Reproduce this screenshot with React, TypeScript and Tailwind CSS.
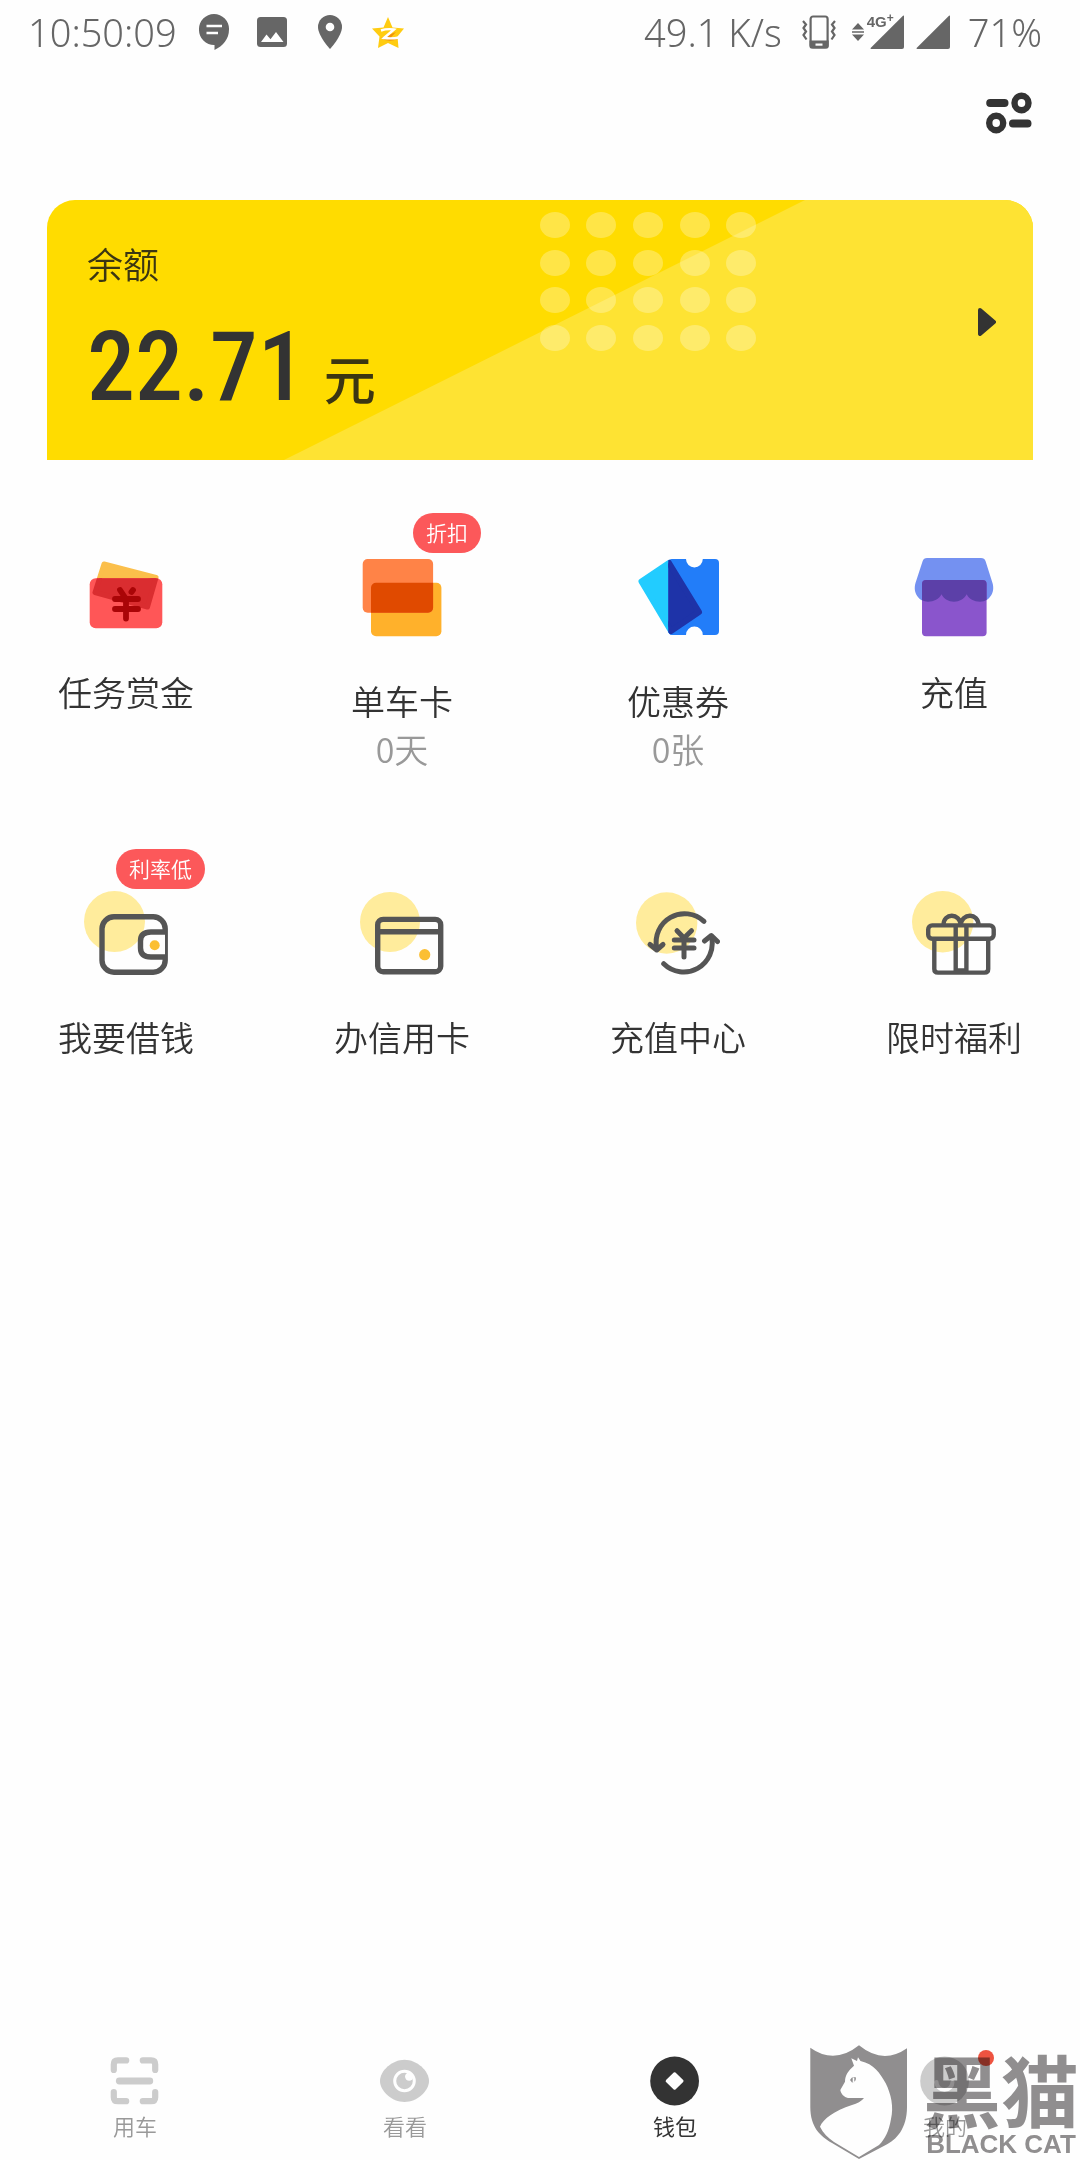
import type { ReactNode } from 'react';

type Feature = {
  label: string;
  icon: ReactNode;
  sub?: string;
  badge?: string;
  tight?: boolean;
};

type Tab = {
  label: string;
  icon: ReactNode;
  active?: boolean;
  dot?: boolean;
};

const BountyIcon = () => (
  <svg viewBox="0 0 84 84" className="size-[84px]">
    <defs>
      <clipPath id="bounty-front">
        <rect x="5.7" y="23.3" width="72.6" height="50" rx="6" />
      </clipPath>
    </defs>
    <path d="M20 9 L72 22.5 L63.5 52 L11 37.5Z" fill="#fbbf4b" stroke="#fbbf4b" strokeWidth="5" strokeLinejoin="round" />
    <rect x="5.7" y="23.3" width="72.6" height="50" rx="6" fill="#ff5657" />
    <path d="M20 9 L72 22.5 L63.5 52 L11 37.5Z" fill="#da2d30" stroke="#da2d30" strokeWidth="5" strokeLinejoin="round" clipPath="url(#bounty-front)" />
    <path d="M36 35 L42 44 M49 35 L47.5 37 M31 44 H54 M31 54 H54 M42 44 V63.5" stroke="#aa0507" strokeWidth="5.8" strokeLinecap="round" fill="none" />
  </svg>
);

const BikeCardIcon = () => (
  <svg viewBox="0 0 84 84" className="size-[84px]">
    <rect x="11" y="27.7" width="70.4" height="53.6" rx="5" fill="#ffb12b" />
    <rect x="2.7" y="4" width="70.4" height="53.7" rx="5" fill="#ff8347" />
    <path d="M16 27.7 H73.1 V52.7 A5 5 0 0 1 68.1 57.7 H11 V32.7 A5 5 0 0 1 16 27.7Z" fill="#e04a00" />
  </svg>
);

const CouponIcon = () => (
  <svg viewBox="0 0 84 84" className="size-[84px]">
    <defs>
      <clipPath id="coupon-right">
        <rect x="32.3" y="0" width="52" height="84" />
      </clipPath>
    </defs>
    <path d="M5.5 26.5 L33 8 L63 57 L35 76Z" fill="#22ccff" stroke="#22ccff" strokeWidth="6" strokeLinejoin="round" />
    <path d="M36 4 H50 A8.4 8.4 0 0 0 66.8 4 H79 A4 4 0 0 1 83 8 V76 A4 4 0 0 1 79 80 H66.8 A8.4 8.4 0 0 0 50 80 H36 A4 4 0 0 1 32.3 76 V8 A4 4 0 0 1 36 4Z" fill="#227df9" />
    <path d="M5.5 26.5 L33 8 L63 57 L35 76Z" fill="#1e33a8" stroke="#1e33a8" strokeWidth="6" strokeLinejoin="round" clipPath="url(#coupon-right)" />
  </svg>
);

const awning =
  'M15 3 H69 Q72.5 3 73.6 6.3 L80.5 28 C83.5 38 77 46.7 68 46.7 C62 46.7 57 44 54.7 39.3 C52 44 47.5 46.7 42 46.7 C36.5 46.7 32 44 29.5 39.3 C27 44 22 46.7 16 46.7 C7 46.7 0.5 38 3.5 28 L10.6 6.3 Q11.7 3 15 3Z';

const ShopIcon = () => (
  <svg viewBox="0 0 84 84" className="size-[84px]">
    <defs>
      <clipPath id="shop-body">
        <rect x="10" y="25" width="64.6" height="56.3" rx="4" />
      </clipPath>
    </defs>
    <path d={awning} fill="#7491f1" />
    <rect x="10" y="25" width="64.6" height="56.3" rx="4" fill="#8a55cc" />
    <path d={awning} fill="#5c40a8" clipPath="url(#shop-body)" />
  </svg>
);

const LoanIcon = () => (
  <svg viewBox="0 0 84 84" className="size-[84px]" fill="none" stroke="#555" strokeWidth="5.4">
    <circle cx="30.5" cy="30.5" r="30.5" fill="#ffec9c" stroke="none" />
    <rect x="18" y="25.8" width="63.2" height="55.4" rx="12" />
    <path d="M81 41 H67 Q56.5 41 56.5 50 V57 Q56.5 66 67 66 H81" fill="#fefefe" />
    <circle cx="70.7" cy="54.3" r="5" fill="#fbbf33" stroke="none" />
  </svg>
);

const CreditCardIcon = () => (
  <svg viewBox="0 0 84 84" className="size-[84px]" fill="none" stroke="#555" strokeWidth="5.4">
    <circle cx="30" cy="31" r="30" fill="#ffec9c" stroke="none" />
    <rect x="17.7" y="28.4" width="63" height="52.3" rx="5.5" />
    <path d="M18 40.8 H80" />
    <circle cx="64.7" cy="63.7" r="5.6" fill="#fbbf33" stroke="none" />
  </svg>
);

const TopUpIcon = () => (
  <svg viewBox="0 0 84 84" className="size-[84px]" fill="none" stroke="#555" strokeWidth="5" strokeLinecap="round" strokeLinejoin="round">
    <circle cx="30.7" cy="32" r="30.7" fill="#ffec9c" stroke="none" />
    <path d="M68 30.3 A28.5 28.5 0 0 0 20.7 57" />
    <path d="M14 53.5 L20.7 59 L27 53.5" />
    <path d="M27.7 72.7 A28.5 28.5 0 0 0 75.5 46" />
    <path d="M68.5 50 L75.3 44.5 L81.5 50.5" />
    <path d="M41 39.7 L48 47 L55.5 39.7 M38.3 49 H58 M38.3 57 H58 M48 48 V66" />
  </svg>
);

const GiftIcon = () => (
  <svg viewBox="0 0 84 84" className="size-[84px]" fill="none" stroke="#555" strokeWidth="4.4">
    <circle cx="30.7" cy="30.7" r="30.7" fill="#ffec9c" stroke="none" />
    <path d="M31.5 34 C31.5 21.5 48 22 48.7 34 C49.5 22 66.5 21.5 66.5 34" />
    <rect x="16.2" y="34.4" width="65.5" height="13.4" rx="4" />
    <path d="M22.3 48 V78 Q22.3 81.6 26 81.6 H72.5 Q76.2 81.6 76.2 78 V48" />
    <path d="M43.7 34 V81 M54.4 34 V81 M44 79.5 H54" />
  </svg>
);

const ScanIcon = () => (
  <svg viewBox="0 0 50 50" className="size-[50px]" fill="none" stroke="#ccc" strokeWidth="6.2" strokeLinecap="round">
    <path d="M3.8 14 V8.4 Q3.8 4.4 7.8 4.4 H16.2 M32.8 4.4 H41.2 Q45.2 4.4 45.2 8.4 V14 M45.2 36 V41.2 Q45.2 45.2 41.2 45.2 H32.8 M16.2 45.2 H7.8 Q3.8 45.2 3.8 41.2 V36" />
    <path d="M9.3 25 H39.8" strokeWidth="6.8" />
  </svg>
);

const EyeIcon = () => (
  <svg viewBox="0 0 50 50" className="size-[50px]">
    <path d="M24.5 3.8 C37 3.8 49 15 49 25 C49 35 37 46 24.5 46 C12 46 0 35 0 25 C0 15 12 3.8 24.5 3.8Z" fill="#ccc" />
    <circle cx="24.5" cy="25" r="9.8" fill="none" stroke="#fefefe" strokeWidth="3" />
    <circle cx="29.2" cy="20.6" r="4.2" fill="#fefefe" />
  </svg>
);

const CoinIcon = () => (
  <svg viewBox="0 0 50 50" className="size-[50px]">
    <circle cx="24.6" cy="25" r="24.4" fill="#333" />
    <path d="M24.6 17.5 L32.3 25 L24.6 32.5 L16.9 25Z" fill="#fefefe" stroke="#fefefe" strokeWidth="2.5" strokeLinejoin="round" />
  </svg>
);

const MeIcon = () => (
  <svg viewBox="0 0 50 50" className="size-[50px]">
    <circle cx="24.6" cy="25" r="24.4" fill="#ccc" />
    <path d="M16.5 26 A8 8 0 0 0 32.5 26" fill="none" stroke="#fefefe" strokeWidth="4" strokeLinecap="round" />
  </svg>
);

const features: Feature[][] = [
  [
    { label: '任务赏金', icon: <BountyIcon />, tight: true },
    { label: '单车卡', icon: <BikeCardIcon />, sub: '0天', badge: '折扣' },
    { label: '优惠券', icon: <CouponIcon />, sub: '0张' },
    { label: '充值', icon: <ShopIcon />, tight: true },
  ],
  [
    { label: '我要借钱', icon: <LoanIcon />, badge: '利率低' },
    { label: '办信用卡', icon: <CreditCardIcon /> },
    { label: '充值中心', icon: <TopUpIcon /> },
    { label: '限时福利', icon: <GiftIcon /> },
  ],
];

const tabs: Tab[] = [
  { label: '用车', icon: <ScanIcon /> },
  { label: '看看', icon: <EyeIcon /> },
  { label: '钱包', icon: <CoinIcon />, active: true },
  { label: '我的', icon: <MeIcon />, dot: true },
];

const StatusBar = () => (
  <div className="flex h-16 items-center justify-between pl-7 pr-[38px] font-['Noto_Sans',sans-serif] text-[38px] leading-none font-light text-[#666]">
    <div className="flex items-center">
      <span className="w-[171px]">10:50:09</span>
      <svg viewBox="0 0 30 36" className="h-9 w-[30px]">
        <path d="M15 0 A15 15 0 0 1 30 15.5 C30 25 24 32 15.5 36 V31 A15 15 0 0 1 0 15.5 A15 15 0 0 1 15 0Z" fill="#666" />
        <path d="M7.5 12 H23 M7.5 19 H19" stroke="#fefefe" strokeWidth="2.6" />
      </svg>
      <svg viewBox="0 0 30 30" className="ml-7 size-[30px]">
        <rect width="30" height="30" rx="3.5" fill="#666" />
        <path d="M4 25 L9.5 17.5 L13.5 22.3 L19 15 L26.5 25Z" fill="#fefefe" />
      </svg>
      <svg viewBox="0 0 24 34" className="ml-[31px] h-[34px] w-6">
        <path d="M12 0 A12 12 0 0 1 24 12 C24 21 12 34 12 34 C12 34 0 21 0 12 A12 12 0 0 1 12 0Z" fill="#666" />
        <circle cx="12" cy="12" r="4.3" fill="#fefefe" />
      </svg>
      <svg viewBox="0 0 32 31" className="ml-[30px] h-[31px] w-8">
        <path d="M16 0 L20.5 10.5 L32 11.5 L25.5 19.5 L26.5 31 L16 26 L6 31 L7.5 19.5 L0 11.5 L11.5 10.5Z" fill="#fc1" />
        <path d="M9 21 Q16 26 26 22 L18 21.5 L24 15Z" fill="#f0920a" />
        <path d="M9 13.5 Q15 11.5 22 12.5 L12 21 Q20 22 27 20.5" fill="none" stroke="#fff" strokeWidth="2.4" />
      </svg>
    </div>
    <div className="flex items-center">
      <span>49.1 K/s</span>
      <svg viewBox="0 0 34 34" className="ml-5 size-[34px]" fill="none" stroke="#666" strokeWidth="2.2">
        <rect x="8.6" y="1.5" width="17" height="31" rx="2.5" />
        <path d="M8.6 26.5 H25.6 V31 Q25.6 32.5 24 32.5 H10 Q8.6 32.5 8.6 31Z" fill="#666" />
        <path d="M13.5 29.6 H20.5" stroke="#fefefe" />
        <path d="M1 6 L4 9.5 L1.5 13 L4 16.5 L1.5 20 L4.5 24.5 M33 6 L30 9.5 L32.5 13 L30 16.5 L32.5 20 L29.5 24.5" />
      </svg>
      <div className="relative ml-4 flex items-center">
        <svg viewBox="0 0 12 18" className="h-[18px] w-3" fill="#666">
          <path d="M6 0 L12 6.5 H0Z M0 11.5 H12 L6 18Z M0 8.3 H12 V9.7 H0Z" />
        </svg>
        <span className="absolute -top-px left-[15px] flex font-['Liberation_Sans',sans-serif] text-[15px] leading-none font-bold">
          4G<span className="text-xs leading-[8px]">+</span>
        </span>
        <svg viewBox="0 0 34 34" className="ml-[6px] size-[34px]">
          <path d="M34 1 Q34 0 33 0.8 L0.6 33 Q0 34 1.5 34 H32 Q34 34 34 32Z" fill="#666" />
        </svg>
      </div>
      <svg viewBox="0 0 34 34" className="ml-3 size-[34px]">
        <path d="M34 1 Q34 0 33 0.8 L0.6 33 Q0 34 1.5 34 H32 Q34 34 34 32Z" fill="#666" />
      </svg>
      <span className="ml-[18px]">71%</span>
    </div>
  </div>
);

const BalanceCard = () => (
  <a href="#balance" className="relative mx-[47px] flex h-[260px] items-center justify-between overflow-hidden rounded-t-[28px] bg-[#ffdc00] pr-[37px] pl-10">
    <svg viewBox="0 0 986 260" preserveAspectRatio="none" className="absolute inset-0 h-full w-full">
      <path d="M237 260 L758 0 H986 V260Z" fill="#fee333" />
      {[25, 63, 100, 138].map((cy) =>
        [508, 554, 601, 648, 694].map((cx) => (
          <ellipse key={`${cx}-${cy}`} cx={cx} cy={cy} rx="15" ry="13" fill="#fff" fillOpacity="0.28" />
        ))
      )}
    </svg>
    <div className="relative text-[#3b3612]">
      <p className="text-[36px] leading-[48px] font-[350]">余额</p>
      <p className="mt-[26px] flex items-baseline gap-[18px]">
        <span className="font-['Roboto_Condensed',sans-serif] text-[96px] leading-[108px] font-medium text-[#333]">22.71</span>
        <span className="text-[52px] leading-none font-medium">元</span>
      </p>
    </div>
    <svg viewBox="0 0 18 28" className="relative mb-4 h-7 w-[18px]">
      <path d="M2 2 L16 14 L2 26Z" fill="#333" stroke="#333" strokeWidth="4" strokeLinejoin="round" />
    </svg>
  </a>
);

const FeatureButton = ({ item }: { item: Feature }) => (
  <button type="button" className="relative flex w-40 flex-col items-center">
    {item.icon}
    {item.badge && (
      <span className="absolute -top-[42px] right-px rounded-full bg-[#fc585a] px-[13px] pb-[2px] text-[21px] leading-[38px] font-[350] text-white">
        {item.badge}
      </span>
    )}
    <span className={`${item.tight ? 'mt-[29px]' : 'mt-[38px]'} text-[34px] leading-[48px] font-[350] whitespace-nowrap text-[#333]`}>
      {item.label}
    </span>
    {item.sub && <span className="text-[34px] leading-[48px] font-[350] text-[#999]">{item.sub}</span>}
  </button>
);

const Watermark = () => (
  <div className="pointer-events-none absolute right-0 bottom-0 flex items-end gap-4 text-[#918f90] mix-blend-multiply">
    <svg viewBox="0 0 97 115" className="h-[115px] w-[97px]">
      <path d="M0.3 2.7 Q24.5 20 49 0.3 Q73 20 97 3.3 V62 C97 84 86 95 75.7 100 L49 114 L22 98 C10 91 0.3 82 0.3 62Z" fill="#918f90" />
      <path d="M41.3 13.3 L47 16 L48 12.3 L50.5 16 C64 19 70 28 75.7 38.3 C81 49 84 62 81 74 C79 86 75 94 69 100 L49 112 L24 97 C18 93 13 88 10 81.7 C13 74 24 66 42 60 Q50 58 54 53 H38 C34 52 31 49 30.3 45 L35 36.7 C35 30 38 26 44 20.7Z" fill="#fff" />
      <path d="M40 35 Q42 31 46 32.5 Q46 37 42 37.5Z" fill="#918f90" />
      <path d="M43.5 32.5 V37" stroke="#fff" strokeWidth="1.6" />
    </svg>
    <div className="mr-px flex flex-col items-center pb-[2px]">
      <span className="text-[78px] leading-[84px] font-bold">黑猫</span>
      <span className="font-['Liberation_Sans',sans-serif] text-[26px] leading-[28px] font-bold whitespace-nowrap">BLACK CAT</span>
    </div>
  </div>
);

const App = () => {
  return (
    <div className="relative flex min-h-screen flex-col bg-[#fefefe] font-['Noto_Sans_CJK_SC',sans-serif]">
      <StatusBar />

      <header className="flex justify-end px-12 pt-7 pb-[66px]">
        <button type="button" aria-label="设置">
          <svg viewBox="0 0 46 42" className="h-[42px] w-[46px]" fill="none" stroke="#333" strokeLinecap="round">
            <path d="M4.2 11 H18.5 M27 31.5 H41.5" strokeWidth="8" />
            <ellipse cx="35.5" cy="11" rx="7" ry="7.2" strokeWidth="6.4" />
            <ellipse cx="10.2" cy="31" rx="7" ry="7.2" strokeWidth="6.4" />
          </svg>
        </button>
      </header>

      <main>
        <BalanceCard />
        <div className="mt-[95px] flex flex-col gap-[118px] px-[46px]">
          {features.map((row, i) => (
            <section key={i} className="flex items-start justify-between">
              {row.map((item) => (
                <FeatureButton key={item.label} item={item} />
              ))}
            </section>
          ))}
        </div>
      </main>

      <nav className="mt-auto grid grid-cols-4 pb-[19px]">
        {tabs.map((tab) => (
          <a key={tab.label} href={`#${tab.label}`} className="flex flex-col items-center">
            <span className="relative">
              {tab.icon}
              {tab.dot && <span className="absolute -top-[6px] -right-6 size-4 rounded-full bg-[#ee5340]" />}
            </span>
            <span className={`mt-[3px] text-[22px] leading-8 ${tab.active ? 'text-[#333]' : 'font-[350] text-[#999]'}`}>{tab.label}</span>
          </a>
        ))}
      </nav>

      <Watermark />
    </div>
  );
};

export default App;
